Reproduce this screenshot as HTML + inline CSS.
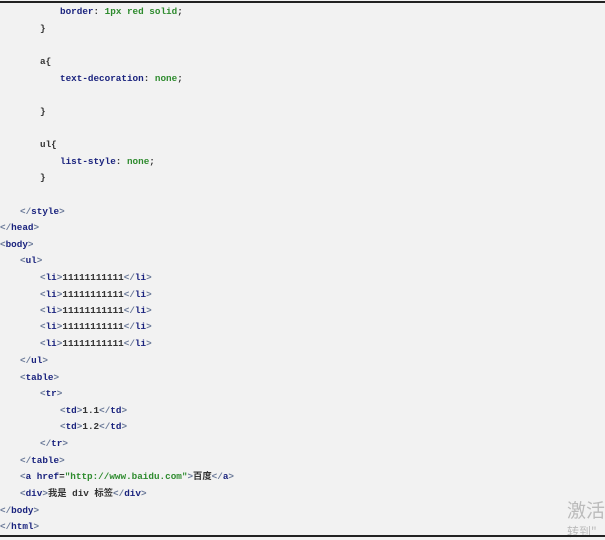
<!DOCTYPE html>
<html><head><meta charset="utf-8"><style>
html,body{margin:0;padding:0}
body{width:605px;height:538px;background:#f2f2f2;position:relative;overflow:hidden;font-family:"Liberation Mono","Noto Sans CJK SC",monospace;font-size:9.3px;font-weight:bold;color:#333}
.top{position:absolute;left:0;top:1px;width:605px;height:2px;background:#222}
.bot{position:absolute;left:0;top:535px;width:605px;height:2px;background:#222}
.l{position:absolute;white-space:pre;line-height:12px;height:12px}
.t{color:#1a237e}.b{color:#6b7a99}.p{color:#1a237e}.v{color:#2e8b2e}.s{color:#2e8b2e}.x{color:#333}
.wm{position:absolute;font-family:"Noto Sans CJK SC",sans-serif;font-weight:normal;color:#bbb}
</style></head><body>
<div class="top"></div>
<div class="l" style="left:60px;top:6px"><span class="p">border</span>: <span class="v">1px red solid</span>;</div>
<div class="l" style="left:40px;top:23px">}</div>
<div class="l" style="left:40px;top:56px">a{</div>
<div class="l" style="left:60px;top:73px"><span class="p">text-decoration</span>: <span class="v">none</span>;</div>
<div class="l" style="left:40px;top:106px">}</div>
<div class="l" style="left:40px;top:139px">ul{</div>
<div class="l" style="left:60px;top:156px"><span class="p">list-style</span>: <span class="v">none</span>;</div>
<div class="l" style="left:40px;top:172px">}</div>
<div class="l" style="left:20px;top:206px"><span class="b">&lt;/</span><span class="t">style</span><span class="b">&gt;</span></div>
<div class="l" style="left:0px;top:222px"><span class="b">&lt;/</span><span class="t">head</span><span class="b">&gt;</span></div>
<div class="l" style="left:0px;top:239px"><span class="b">&lt;</span><span class="t">body</span><span class="b">&gt;</span></div>
<div class="l" style="left:20px;top:255px"><span class="b">&lt;</span><span class="t">ul</span><span class="b">&gt;</span></div>
<div class="l" style="left:40px;top:272px"><span class="b">&lt;</span><span class="t">li</span><span class="b">&gt;</span>11111111111<span class="b">&lt;/</span><span class="t">li</span><span class="b">&gt;</span></div>
<div class="l" style="left:40px;top:289px"><span class="b">&lt;</span><span class="t">li</span><span class="b">&gt;</span>11111111111<span class="b">&lt;/</span><span class="t">li</span><span class="b">&gt;</span></div>
<div class="l" style="left:40px;top:305px"><span class="b">&lt;</span><span class="t">li</span><span class="b">&gt;</span>11111111111<span class="b">&lt;/</span><span class="t">li</span><span class="b">&gt;</span></div>
<div class="l" style="left:40px;top:321px"><span class="b">&lt;</span><span class="t">li</span><span class="b">&gt;</span>11111111111<span class="b">&lt;/</span><span class="t">li</span><span class="b">&gt;</span></div>
<div class="l" style="left:40px;top:338px"><span class="b">&lt;</span><span class="t">li</span><span class="b">&gt;</span>11111111111<span class="b">&lt;/</span><span class="t">li</span><span class="b">&gt;</span></div>
<div class="l" style="left:20px;top:355px"><span class="b">&lt;/</span><span class="t">ul</span><span class="b">&gt;</span></div>
<div class="l" style="left:20px;top:372px"><span class="b">&lt;</span><span class="t">table</span><span class="b">&gt;</span></div>
<div class="l" style="left:40px;top:388px"><span class="b">&lt;</span><span class="t">tr</span><span class="b">&gt;</span></div>
<div class="l" style="left:60px;top:405px"><span class="b">&lt;</span><span class="t">td</span><span class="b">&gt;</span>1.1<span class="b">&lt;/</span><span class="t">td</span><span class="b">&gt;</span></div>
<div class="l" style="left:60px;top:421px"><span class="b">&lt;</span><span class="t">td</span><span class="b">&gt;</span>1.2<span class="b">&lt;/</span><span class="t">td</span><span class="b">&gt;</span></div>
<div class="l" style="left:40px;top:438px"><span class="b">&lt;/</span><span class="t">tr</span><span class="b">&gt;</span></div>
<div class="l" style="left:20px;top:455px"><span class="b">&lt;/</span><span class="t">table</span><span class="b">&gt;</span></div>
<div class="l" style="left:20px;top:471px"><span class="b">&lt;</span><span class="t">a</span> <span class="t">href</span>=<span class="s">"http://www.baidu.com"</span><span class="b">&gt;</span>百度<span class="b">&lt;/</span><span class="t">a</span><span class="b">&gt;</span></div>
<div class="l" style="left:20px;top:488px"><span class="b">&lt;</span><span class="t">div</span><span class="b">&gt;</span>我是 div 标签<span class="b">&lt;/</span><span class="t">div</span><span class="b">&gt;</span></div>
<div class="l" style="left:0px;top:505px"><span class="b">&lt;/</span><span class="t">body</span><span class="b">&gt;</span></div>
<div class="l" style="left:0px;top:521px"><span class="b">&lt;/</span><span class="t">html</span><span class="b">&gt;</span></div>
<div class="wm" style="left:567px;top:498px;font-size:19px;line-height:24px">激活</div>
<div class="wm" style="left:567px;top:525px;font-size:12px;line-height:14px">转到"</div>
<div class="bot"></div>
</body></html>
